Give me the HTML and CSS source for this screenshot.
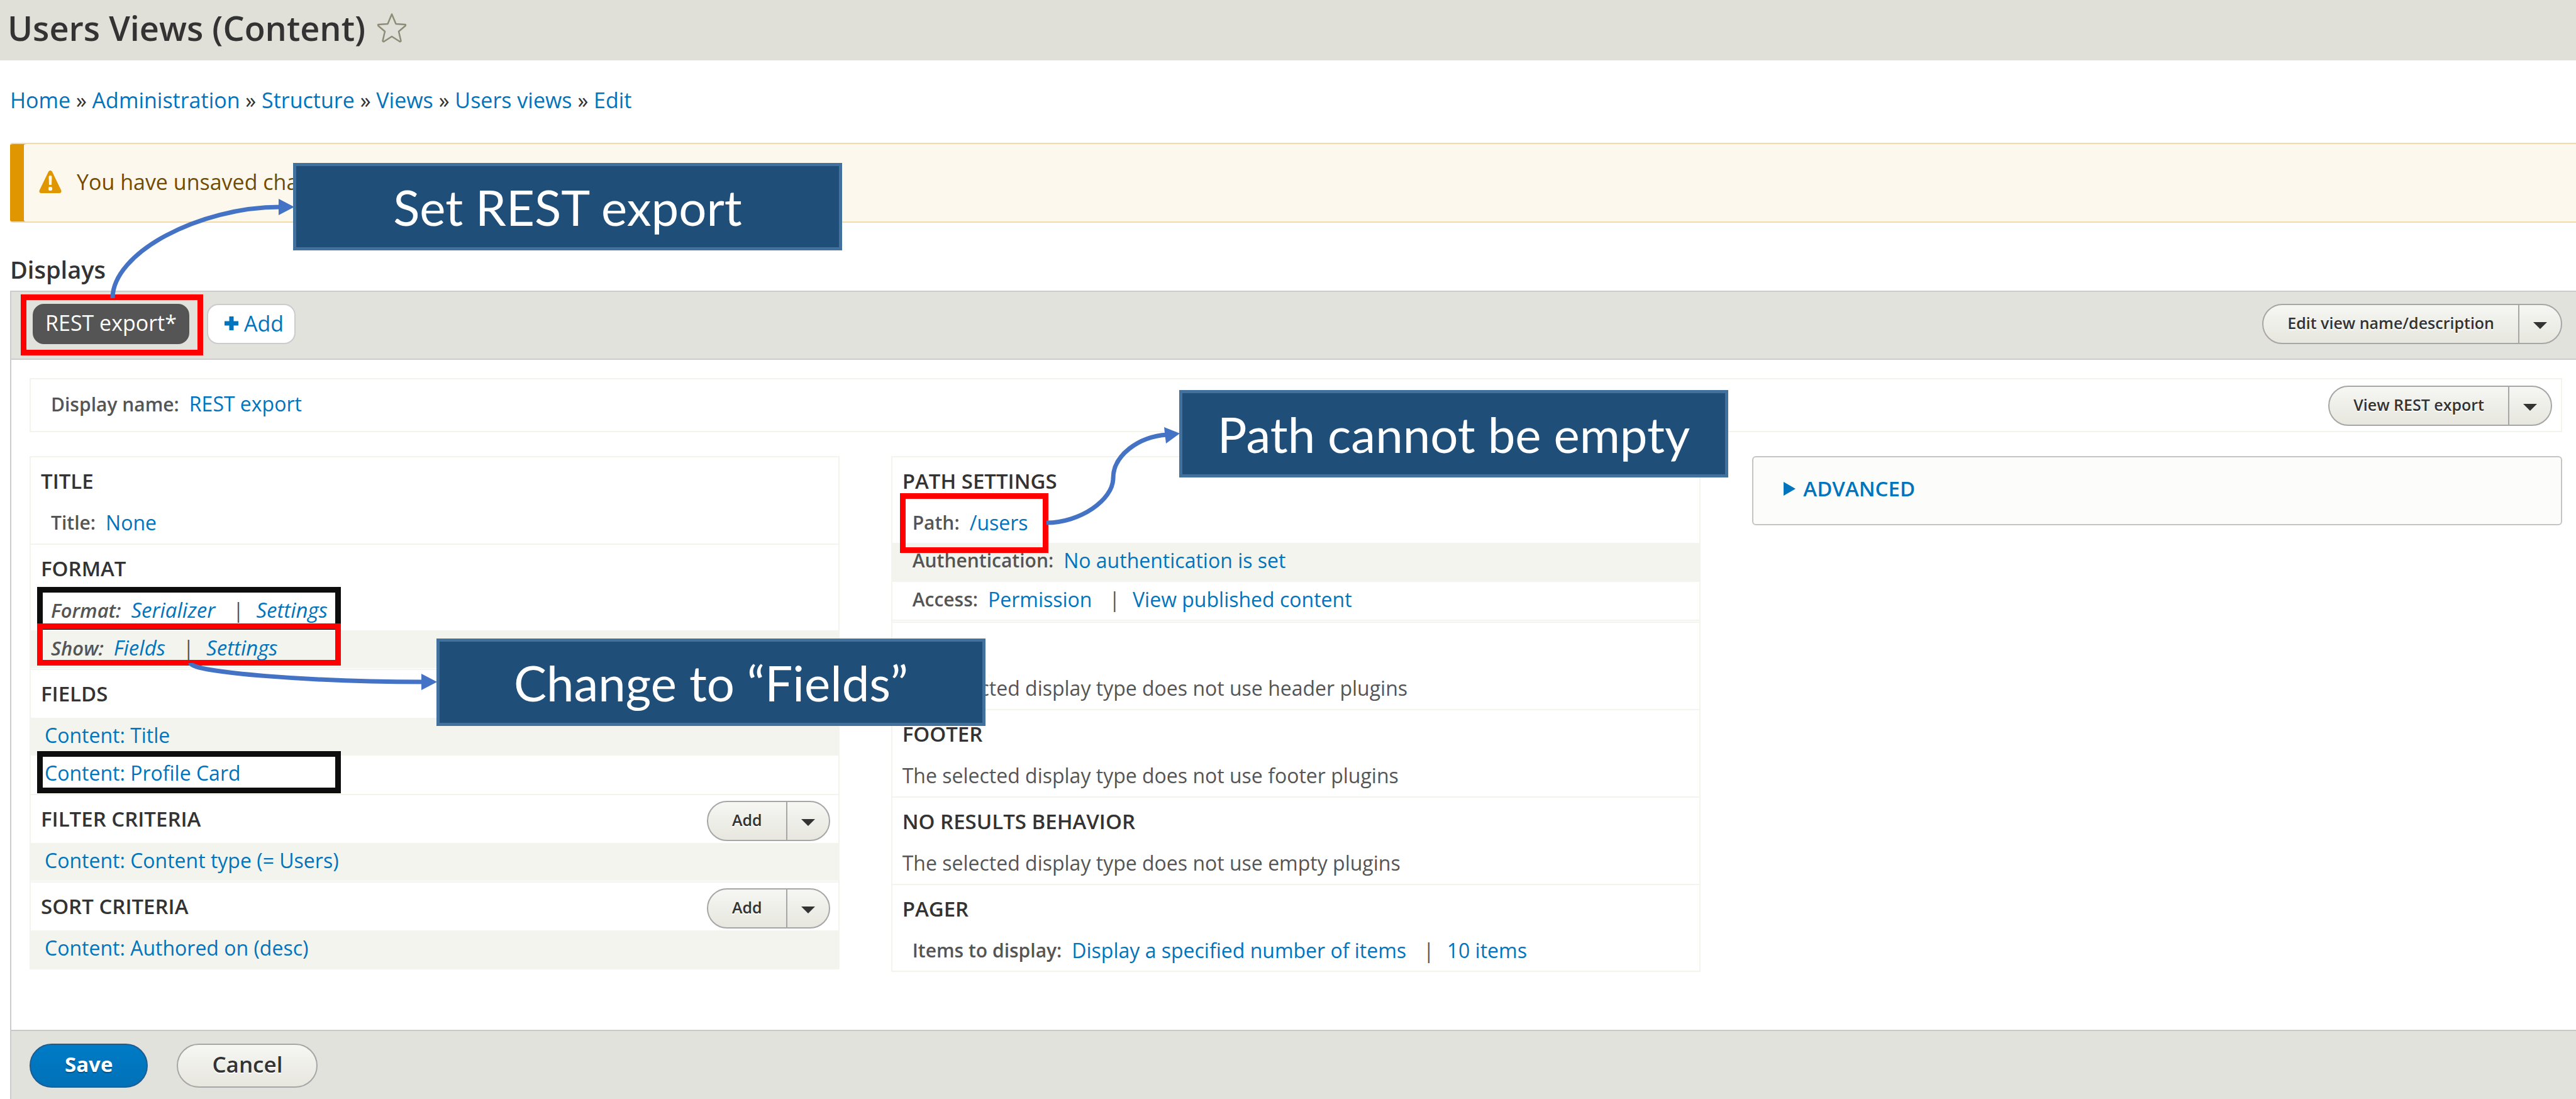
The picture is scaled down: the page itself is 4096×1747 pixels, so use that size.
FILE: index.html
```html
<!DOCTYPE html>
<html lang="en">
<head>
<meta charset="utf-8">
<title>Users Views (Content)</title>
<link rel="stylesheet" href="styles.css">
</head>
<body>
<header class="page-header">
  <h1 class="page-title">Users Views (Content)</h1>
  <button class="star" type="button" aria-label="Add to shortcuts">
    <svg width="48" height="48" viewBox="-1 -1 48 48"><path d="M23 1.500 L29.500 17 L44.500 18 Q45.500 19 44 20.500 L34 29 L37.500 44 Q37 45.500 35.500 45 L23 37 L10.500 45 Q9 45.500 8.500 44 L12 29 L2 20.500 Q0.500 19 1.500 18 L16.500 17 Z" fill="none" stroke="#8e8b77" stroke-width="2.500" stroke-linejoin="round"/></svg>
  </button>
</header>

<main class="content">
  <nav class="breadcrumb" aria-label="Breadcrumb">
    <a href="#">Home</a> » <a href="#">Administration</a> » <a href="#">Structure</a> » <a href="#">Views</a> » <a href="#">Users views</a> » <a href="#">Edit</a>
  </nav>

  <div class="warning" role="status">
    <svg width="36" height="38" viewBox="0 0 36 38"><path d="M18 1 C19.500 1 20.500 2 21 3 L35 32 C36.500 35 35 37 32.500 37 L3.500 37 C1 37 -0.500 35 1 32 L15 3 C15.500 2 16.500 1 18 1 Z" fill="#e09600"/><path d="M15.500 11 Q15.500 9 18 9 Q20.500 9 20.500 11 L20 24 L16 24 Z" fill="#fff8e8"/><rect x="15" y="27" width="6" height="6" rx="2" fill="#fff8e8"/></svg>
    <span>You have unsaved changes.</span>
  </div>

  <h2 class="displays-title">Displays</h2>

  <section class="panel">
    <div class="tabs">
      <button class="tab tab--active" type="button">REST export*</button>
      <button class="tab tab--add" type="button"><svg width="24" height="24" viewBox="0 0 24 24"><path d="M8.500 1 H15.500 V8.500 H23 V15.500 H15.500 V23 H8.500 V15.500 H1 V8.500 H8.500 Z" fill="#0074bd"/></svg>Add</button>
      <div class="split split--end">
        <button class="split-main" type="button">Edit view name/description</button>
        <button class="split-toggle" type="button" aria-label="List additional actions"></button>
      </div>
    </div>

    <div class="panel-body">
      <div class="display-row">
        <div class="row-text"><span class="label">Display name:</span><a href="#">REST export</a></div>
        <div class="split split--end">
          <button class="split-main" type="button">View REST export</button>
          <button class="split-toggle" type="button" aria-label="List additional actions"></button>
        </div>
      </div>

      <div class="columns">
        <div class="column">
          <section class="bucket">
            <div class="bucket-head"><h3>Title</h3></div>
            <div class="row"><span class="label">Title:</span><a href="#">None</a></div>
          </section>
          <section class="bucket">
            <div class="bucket-head"><h3>Format</h3></div>
            <div class="row row--changed"><span class="label">Format:</span><a href="#">Serializer</a><span class="sep">|</span><a href="#">Settings</a></div>
            <div class="row row--changed row--shade"><span class="label">Show:</span><a href="#">Fields</a><span class="sep">|</span><a href="#">Settings</a></div>
          </section>
          <section class="bucket">
            <div class="bucket-head"><h3>Fields</h3></div>
            <div class="row row--item row--shade"><a href="#">Content: Title</a></div>
            <div class="row row--item"><a href="#">Content: Profile Card</a></div>
          </section>
          <section class="bucket">
            <div class="bucket-head"><h3>Filter criteria</h3>
              <div class="split split--head">
                <button class="split-main" type="button">Add</button>
                <button class="split-toggle" type="button" aria-label="List additional actions"></button>
              </div>
            </div>
            <div class="row row--item row--shade"><a href="#">Content: Content type (= Users)</a></div>
          </section>
          <section class="bucket">
            <div class="bucket-head"><h3>Sort criteria</h3>
              <div class="split split--head">
                <button class="split-main" type="button">Add</button>
                <button class="split-toggle" type="button" aria-label="List additional actions"></button>
              </div>
            </div>
            <div class="row row--item row--shade"><a href="#">Content: Authored on (desc)</a></div>
          </section>
        </div>

        <div class="column">
          <section class="bucket">
            <div class="bucket-head"><h3>Path settings</h3></div>
            <div class="row"><span class="label">Path:</span><a href="#">/users</a></div>
            <div class="row row--shade row--ruled"><span class="label">Authentication:</span><a href="#">No authentication is set</a></div>
            <div class="row row--ruled"><span class="label">Access:</span><a href="#">Permission</a><span class="sep">|</span><a href="#">View published content</a></div>
          </section>
          <section class="bucket">
            <div class="bucket-head"><h3>Header</h3></div>
            <p class="row row--note">The selected display type does not use header plugins</p>
          </section>
          <section class="bucket">
            <div class="bucket-head"><h3>Footer</h3></div>
            <p class="row row--note">The selected display type does not use footer plugins</p>
          </section>
          <section class="bucket">
            <div class="bucket-head"><h3>No results behavior</h3></div>
            <p class="row row--note">The selected display type does not use empty plugins</p>
          </section>
          <section class="bucket">
            <div class="bucket-head"><h3>Pager</h3></div>
            <div class="row"><span class="label">Items to display:</span><a href="#">Display a specified number of items</a><span class="sep">|</span><a href="#">10 items</a></div>
          </section>
        </div>

        <details class="advanced">
          <summary>Advanced</summary>
        </details>
      </div>
    </div>

    <div class="actions">
      <button class="action action--primary" type="submit">Save</button>
      <button class="action" type="button">Cancel</button>
    </div>
  </section>
</main>

<!-- Tutorial annotations laid over the page -->
<div class="annotations">
  <div class="mark mark--format"></div>
  <div class="mark mark--profile"></div>
  <div class="mark mark--red mark--tab"></div>
  <div class="mark mark--red mark--show"></div>
  <div class="mark mark--red mark--path"></div>
  <svg class="arrows" width="2000" height="1200" viewBox="0 0 2000 1200">
    <g fill="none" stroke="#4472c4" stroke-width="7">
      <path d="M179 474 C179 402 316 329 446 329"/>
      <path d="M1664 831 C1717 831 1770 795 1770 760 C1770 724 1810 694 1856 691"/>
      <path d="M303 1054 C303 1069 499 1084 673 1084"/>
    </g>
    <g fill="#4472c4">
      <path d="M443 316 L468 329 L443 342 Z"/>
      <path d="M1851 679 L1876 689 L1854 705 Z"/>
      <path d="M670 1071 L695 1084 L670 1097 Z"/>
    </g>
  </svg>
  <div class="callout callout--rest">Set REST export</div>
  <div class="callout callout--path">Path cannot be empty</div>
  <div class="callout callout--fields">Change to “Fields”</div>
</div>
</body>
</html>
```
FILE: styles.css
```css
* { box-sizing: border-box; }

body {
  margin: 0;
  position: relative;
  background: #fff;
  color: #333;
  font-family: "Open Sans", "Noto Sans", sans-serif;
  font-size: 34px;
  line-height: 44px;
}

a { color: #0074bd; text-decoration: none; }
h1, h2, h3, p { margin: 0; }
button { font-family: inherit; margin: 0; cursor: pointer; }
svg { display: block; }

.page-header {
  display: flex;
  align-items: center;
  gap: 18px;
  height: 96px;
  padding: 0 16px 8px 12px;
  background: #e0e0d8;
}
.page-title { font-size: 54px; line-height: 72px; font-weight: 600; }
.star { padding: 0; border: 0; background: none; }

.content { padding-left: 16px; }
.breadcrumb { padding: 41px 0 46px; }

.warning {
  display: flex;
  align-items: center;
  gap: 24px;
  height: 127px;
  padding: 0 24px 4px 46px;
  border: solid #f4daa6;
  border-width: 2px 0;
  border-radius: 4px 0 0 4px;
  box-shadow: inset 22px 0 0 #e09600;
  background: #fdf8ed;
  color: #734c00;
}

.displays-title {
  padding: 50px 0 10px;
  font-size: 38px;
  line-height: 48px;
  font-weight: 600;
}

.panel { border-left: 2px solid #ccc; }
.tabs {
  display: flex;
  align-items: center;
  gap: 28px;
  height: 110px;
  padding: 0 22px 4px 34px;
  border: solid #ccc;
  border-width: 2px 0;
  background: #e1e2dc;
}
.tab {
  display: flex;
  align-items: center;
  justify-content: center;
  gap: 8px;
  height: 64px;
  border: 2px solid #ccc;
  border-radius: 18px;
  font-size: 34px;
  line-height: 44px;
}
.tab--active { padding: 0 18px 4px; border-color: #555; background: #555; color: #fff; }
.tab--add { padding: 0 17px 2px 25px; background: #fff; color: #0074bd; }

.split {
  display: flex;
  height: 64px;
  border: 2px solid #a6a6a6;
  border-radius: 32px;
  background: linear-gradient(#f6f6f3, #e7e7df);
}
.split--end { margin-left: auto; }
.split--head { margin: 0 0 3px auto; align-self: flex-end; }
.split-main {
  padding: 0 38px 5px;
  border: 0;
  border-right: 2px solid #a6a6a6;
  background: none;
  color: #333;
  font-size: 25px;
  line-height: 32px;
  font-weight: 600;
  text-shadow: 0 2px #fff;
}
.split-toggle {
  display: flex;
  align-items: center;
  justify-content: center;
  width: 66px;
  padding: 4px 0 0;
  border: 0;
  background: none;
}
.split-toggle::before {
  content: "";
  border: solid transparent;
  border-width: 11px 11px 0;
  border-top-color: #333;
}

.panel-body { padding: 29px 22px 92px 29px; font-size: 32px; }
.display-row {
  display: flex;
  align-items: center;
  height: 86px;
  padding: 2px 14px 0 32px;
  border: 2px solid #f3f4ee;
}
.row-text { padding-bottom: 6px; }

.columns {
  display: grid;
  grid-template-columns: repeat(3, 1fr);
  align-items: start;
  gap: 82px;
  margin-top: 38px;
}
.column { border: solid #f3f4ee; border-width: 0 2px 2px; }
.bucket { padding-bottom: 1px; border-top: 2px solid #f3f4ee; }
.bucket:last-child { padding-bottom: 0; }
.bucket-head { display: flex; height: 76px; padding: 0 13px 0 16px; }
.bucket-head h3 {
  font-size: 33px;
  line-height: 76px;
  font-weight: 600;
  text-transform: uppercase;
}
.row {
  display: flex;
  padding: 0 16px 4px 32px;
  line-height: 56px;
  color: #555;
}
.row--item { padding-left: 22px; }
.row--note { padding-left: 16px; }
.row--shade { background: #f3f4ee; }
.row--changed { font-size: 33px; font-style: italic; }
.row--ruled { border-bottom: 2px solid #f3f4ee; }
.label { margin-right: 16px; color: #555; font-size: 30px; font-weight: 600; }
.row--changed .label { font-size: 31px; }
.sep { margin: 0 20px 0 27px; }

.advanced {
  height: 110px;
  border: 2px solid #c4c4c0;
  border-radius: 6px;
  background: #fcfcfa;
}
.advanced summary {
  display: flex;
  align-items: center;
  gap: 12px;
  height: 100px;
  padding-left: 48px;
  color: #0074bd;
  font-size: 33px;
  font-weight: 600;
  text-transform: uppercase;
  list-style: none;
}
.advanced summary::before {
  content: "";
  border: solid transparent;
  border-width: 11px 0 11px 19px;
  border-left-color: #0074bd;
}

.actions {
  display: flex;
  align-items: center;
  gap: 46px;
  height: 113px;
  padding: 0 29px;
  border: solid #c8c8c4;
  border-width: 2px 0;
  background: #e1e2dc;
}
.action {
  height: 70px;
  padding: 0 54px 4px;
  border: 2px solid #a6a6a6;
  border-radius: 35px;
  background: linear-gradient(#f6f6f3, #e7e7df);
  color: #333;
  font-size: 35px;
  line-height: 44px;
  font-weight: 600;
  text-shadow: 0 2px #fff;
}
.action--primary {
  border-color: #1e5c90;
  background: linear-gradient(#007bc6, #0071b8);
  color: #fff;
  font-size: 33px;
  font-weight: 700;
  text-shadow: 0 2px #0a4f80;
}

.annotations { position: absolute; top: 0; left: 0; pointer-events: none; }
.arrows { position: absolute; top: 0; left: 0; }
.mark { position: absolute; border: 9px solid #0d0d0d; }
.mark--red { border-color: #f00; }
.mark--tab { left: 33px; top: 468px; width: 290px; height: 97px; }
.mark--format { left: 59px; top: 933px; width: 483px; height: 68px; }
.mark--show { left: 59px; top: 991px; width: 483px; height: 67px; }
.mark--profile { left: 59px; top: 1194px; width: 483px; height: 67px; }
.mark--path { left: 1431px; top: 784px; width: 236px; height: 95px; }

.callout {
  position: absolute;
  display: flex;
  align-items: center;
  justify-content: center;
  width: 873px;
  height: 139px;
  border: 5px solid #41719c;
  background: #1f4e79;
  color: #fff;
  font-family: Lato, "Open Sans", sans-serif;
  font-size: 78px;
  line-height: 100px;
  white-space: nowrap;
}
.callout--rest { left: 466px; top: 259px; }
.callout--path { left: 1875px; top: 620px; }
.callout--fields { left: 694px; top: 1015px; }
```
